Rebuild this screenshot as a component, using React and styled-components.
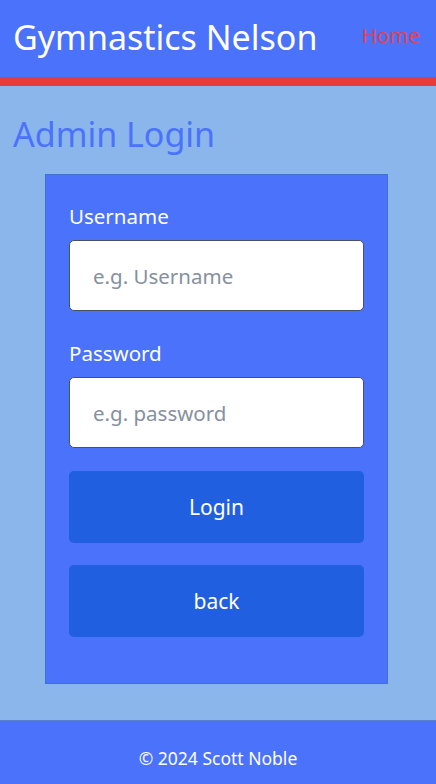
import React from 'react'
import styled, { createGlobalStyle } from 'styled-components'

const GlobalStyle = createGlobalStyle`
    html, body {
        margin: 0;
        padding: 0;
    }
    body {
        font-family: "Noto Sans", "Open Sans", sans-serif;
        background: #8ab6ec;
    }
    * { box-sizing: border-box; }
`;

const Page = styled.div`
    min-height: 784px;
    display: flex;
    flex-direction: column;
`;

const Header = styled.header`
    height: 86px;
    background: #4a72fb;
    border-bottom: 9px solid #e83c3c;
    display: flex;
    justify-content: space-between;
    align-items: flex-start;
    padding: 13px 16px 0 13px;
`;

const Brand = styled.h1`
    margin: 0;
    font-size: 34px;
    font-weight: 400;
    color: #fff;
    line-height: 48px;
`;

const NavLink = styled.a`
    color: #e8404a;
    font-size: 20.5px;
    line-height: 28px;
    margin-top: 8px;
    text-decoration: none;
`;

const Main = styled.main`
    flex: 1;
    padding: 0 0 36px;
`;

const Title = styled.h2`
    margin: 0;
    padding: 22px 13px 0;
    font-size: 34px;
    font-weight: 400;
    color: #4a72fb;
    line-height: 52px;
`;

const Card = styled.form`
    margin: 14px 48px 0 45px;
    background: #4a72fb;
    border: 1.5px solid #4370d8;
    padding: 28px 23px 46px;
    display: flex;
    flex-direction: column;
`;

const Label = styled.label`
    color: #fff;
    font-size: 20.5px;
    line-height: 26px;
    margin-bottom: 11px;
`;

const Input = styled.input`
    height: 71px;
    border-radius: 5px;
    border: 1px solid #4a5060;
    background: #fff;
    padding: 0 23px;
    font-family: inherit;
    font-size: 20.5px;
    color: #333;
    outline: none;
    margin-bottom: ${p => p.$bottom || 29}px;
    &::placeholder {
        color: #8690a0;
    }
`;

const Button = styled.button`
    height: 72px;
    border: none;
    border-radius: 5px;
    background: #2060e0;
    color: #fff;
    font-family: inherit;
    font-size: 21px;
    margin-top: ${p => p.$top || 0}px;
    cursor: pointer;
`;

const Footer = styled.footer`
    height: 64px;
    background: #4a72fb;
    border-top: 1px solid #5a7fd0;
    display: flex;
    align-items: center;
    justify-content: center;
    color: #fff;
    font-size: 17.5px;
    padding-top: 10px;
`;

export default function App() {
    return (
        <Page>
            <GlobalStyle />
            <Header>
                <Brand>Gymnastics Nelson</Brand>
                <NavLink href="#">Home</NavLink>
            </Header>
            <Main>
                <Title>Admin Login</Title>
                <Card onSubmit={e => e.preventDefault()}>
                    <Label htmlFor="username">Username</Label>
                    <Input id="username" type="text" placeholder="e.g. Username" />
                    <Label htmlFor="password">Password</Label>
                    <Input id="password" type="password" placeholder="e.g. password" $bottom={23} />
                    <Button type="submit">Login</Button>
                    <Button type="button" $top={22}>back</Button>
                </Card>
            </Main>
            <Footer>© 2024 Scott Noble</Footer>
        </Page>
    )
}
